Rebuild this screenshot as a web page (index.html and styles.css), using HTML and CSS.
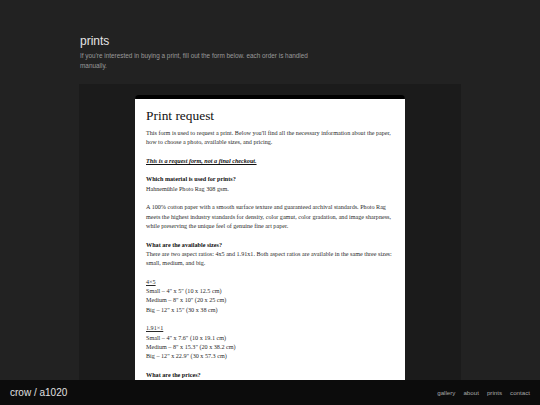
FILE: index.html
```html
<!DOCTYPE html>
<html lang="en">
<head>
<meta charset="utf-8">
<title>prints</title>
<link rel="stylesheet" href="styles.css">
</head>
<body>
<main class="page">
  <header class="intro">
    <h1 class="intro-title">prints</h1>
    <p class="intro-text">If you're interested in buying a print, fill out the form below. each order is handled manually.</p>
  </header>
  <section class="panel">
    <article class="doc">
      <h2 class="doc-title">Print request</h2>
      <p class="para">This form is used to request a print. Below you'll find all the necessary information about the paper, how to choose a photo, available sizes, and pricing.</p>
      <p class="para"><strong class="notice">This is a request form, not a final checkout.</strong></p>
      <p class="para"><strong>Which material is used for prints?</strong><br>Hahnemühle Photo Rag 308 gsm.</p>
      <p class="para">A 100% cotton paper with a smooth surface texture and guaranteed archival standards. Photo Rag meets the highest industry standards for density, color gamut, color gradation, and image sharpness, while preserving the unique feel of genuine fine art paper.</p>
      <p class="para"><strong>What are the available sizes?</strong><br>There are two aspect ratios: 4x5 and 1.91x1. Both aspect ratios are available in the same three sizes: small, medium, and big.</p>
      <p class="para"><span class="ratio">4×5</span><br>Small – 4" x 5" (10 x 12.5 cm)<br>Medium – 8" x 10" (20 x 25 cm)<br>Big – 12" x 15" (30 x 38 cm)</p>
      <p class="para"><span class="ratio">1.91×1</span><br>Small – 4" x 7.6" (10 x 19.1 cm)<br>Medium – 8" x 15.3" (20 x 38.2 cm)<br>Big – 12" x 22.9" (30 x 57.3 cm)</p>
      <p class="para"><strong>What are the prices?</strong><br>Prices depend on the size of the print and include the paper, printing and packaging.</p>
    </article>
  </section>
</main>
<footer class="site-footer">
  <span class="brand">crow / a1020</span>
  <nav class="nav">
    <a class="nav-link" href="#">gallery</a>
    <a class="nav-link" href="#">about</a>
    <a class="nav-link" href="#">prints</a>
    <a class="nav-link" href="#">contact</a>
  </nav>
</footer>
</body>
</html>
```

FILE: styles.css
```css
html, body {
  margin: 0;
  padding: 0;
  background: #222222;
  height: 100%;
  overflow: hidden;
}

body {
  font-family: "Liberation Sans", Arial, sans-serif;
  color: #dddddd;
}

.page {
  width: 382px;
  margin: 0 auto;
  padding-top: 34px;
}

.intro {
  padding: 0 1px;
}

.intro-title {
  margin: 0;
  font-size: 12px;
  line-height: 14px;
  font-weight: normal;
  color: #e6e6e6;
}

.intro-text {
  margin: 3px 0 0;
  max-width: 240px;
  font-size: 6.4px;
  line-height: 10px;
  color: #9a9a9a;
}

.panel {
  margin-top: 13px;
  background: #1b1b1b;
  padding: 11px 56px 0;
  height: 300px;
  overflow: hidden;
}

.doc {
  background: #ffffff;
  border-top: 4px solid #000000;
  border-radius: 4px 4px 0 0;
  padding: 9px 8px 40px 11px;
  font-family: "Liberation Serif", "Times New Roman", serif;
  color: #2a2a2a;
  font-size: 6.15px;
  line-height: 9.3px;
}

.doc-title {
  margin: 0 0 5px;
  font-size: 13.4px;
  line-height: 16px;
  font-weight: normal;
  color: #111111;
}

.para {
  margin: 0 0 9.3px;
}

.para strong {
  font-weight: bold;
  color: #111111;
}

.notice {
  font-style: italic;
  text-decoration: underline;
}

.ratio {
  text-decoration: underline;
}

.site-footer {
  position: fixed;
  left: 0;
  right: 0;
  bottom: 0;
  height: 25px;
  background: #0c0c0c;
  display: flex;
  align-items: center;
  justify-content: space-between;
  padding: 0 10px;
}

.brand {
  font-size: 10px;
  color: #e0e0e0;
}

.nav {
  display: flex;
  gap: 8px;
}

.nav-link {
  font-size: 6.2px;
  color: #a8a8a8;
  text-decoration: none;
}
```
